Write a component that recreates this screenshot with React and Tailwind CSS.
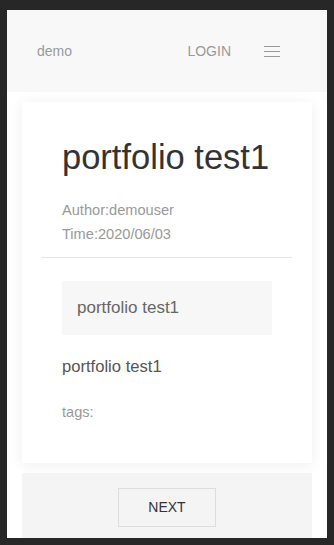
export default function App() {
  return (
    <div
      className="h-[545px] bg-[#272727] pt-[10px] px-[7px] pb-[7px] overflow-hidden"
      style={{ fontFamily: '"Liberation Sans", Arial, sans-serif' }}
    >
      <div className="h-full bg-white overflow-hidden">
        {/* Header */}
        <header className="h-[82px] bg-[#f8f8f8] flex items-center pl-[30px] pr-[47px]">
          <span className="text-[14px] text-[#999]">demo</span>
          <span className="ml-auto text-[14px] text-[#999]">LOGIN</span>
          <button className="ml-[33px] w-4 flex flex-col gap-[4px]" aria-label="menu">
            <span className="block h-px bg-[#999]" />
            <span className="block h-px bg-[#999]" />
            <span className="block h-px bg-[#999]" />
          </button>
        </header>

        <main className="px-[15px] pt-[10px]">
          {/* Post card */}
          <article className="bg-white shadow-[0_2px_14px_rgba(0,0,0,0.07)] px-[40px] pt-[35px] pb-[41px]">
            <h1 className="text-[34.5px] leading-[40px] text-[#333]">portfolio test1</h1>
            <div className="mt-[21px] text-[14.6px] leading-[24px] text-[#999]">
              <p>Author:demouser</p>
              <p>Time:2020/06/03</p>
            </div>
            <hr className="mt-[11px] -mx-[20px] border-t border-[#e5e5e5]" />
            <div className="mt-[23px] w-[210px] h-[54px] bg-[#f7f7f7] flex items-center px-[15px]">
              <span className="text-[17px] text-[#666]">portfolio test1</span>
            </div>
            <p className="mt-[20px] text-[16.6px] leading-[24px] text-[#555]">portfolio test1</p>
            <p className="mt-[23px] text-[14.6px] leading-[20px] text-[#999]">tags:</p>
          </article>

          {/* Pager */}
          <div className="mt-[10px] bg-[#f4f4f4] pt-[15px] pb-[20px] flex justify-center">
            <button className="w-[98px] h-[39px] border border-[#ddd] text-[14px] text-[#333]">
              NEXT
            </button>
          </div>
        </main>
      </div>
    </div>
  );
}
